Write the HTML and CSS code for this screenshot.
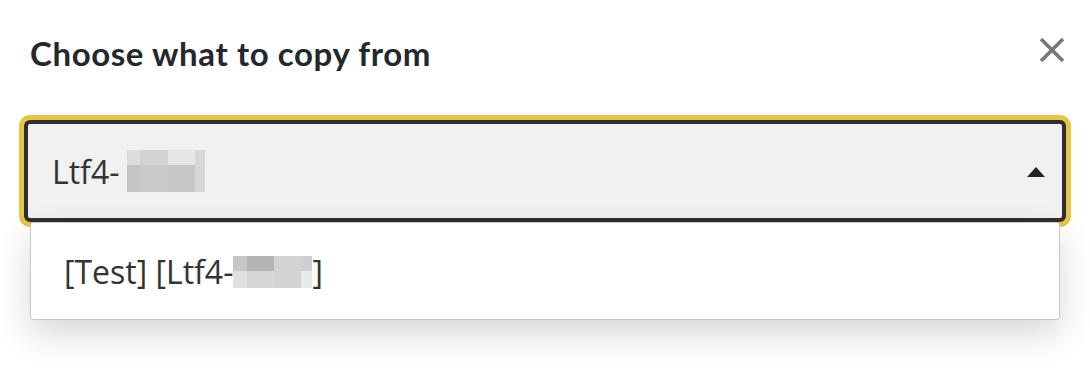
FILE: index.html
```html
<!DOCTYPE html>
<html lang="en">
<head>
    <meta charset="UTF-8">
    <meta name="viewport" content="width=device-width, initial-scale=1.0">
    <title>Choose what to copy from</title>
    <link rel="stylesheet" href="styles.css">
</head>
<body>
    <div class="dialog">
        <div class="dialog-header">
            <h2>Choose what to copy from</h2>
            <button class="close-btn" aria-label="Close">
                <svg viewBox="0 0 26 26" width="26" height="26">
                    <path d="M2 2 L24 24 M24 2 L2 24" stroke="#777" stroke-width="3.6" fill="none"/>
                </svg>
            </button>
        </div>

        <div class="select-wrap">
            <div class="select">
                <span class="select-value">Ltf4-<span class="blur blur-a">
                    <i class="c1"></i><i class="c2"></i><i class="c3"></i><i class="c4"></i>
                    <i class="c5"></i><i class="c6"></i><i class="c7"></i><i class="c8"></i>
                </span></span>
                <span class="caret"></span>
            </div>

            <div class="options">
                <div class="option">[Test] [Ltf4-<span class="blur blur-b">
                    <i class="d1"></i><i class="d2"></i><i class="d3"></i><i class="d4"></i>
                    <i class="d5"></i><i class="d6"></i><i class="d7"></i><i class="d8"></i>
                </span>]</div>
            </div>
        </div>
    </div>
</body>
</html>
```

FILE: styles.css
```css
* {
    margin: 0;
    padding: 0;
    box-sizing: border-box;
}

body {
    font-family: 'Open Sans', 'Noto Sans', Arial, sans-serif;
    background: #fff;
    color: #333;
    min-height: 370px;
}

.dialog {
    padding: 0 24px 50px;
}

.dialog-header {
    display: flex;
    align-items: center;
    justify-content: space-between;
    height: 108px;
    padding: 0 0 2px 6px;
}

.dialog-header h2 {
    font-family: 'Lato', Arial, sans-serif;
    font-weight: 700;
    font-size: 33px;
    letter-spacing: 0.6px;
    color: #24272b;
}

.close-btn {
    background: none;
    border: none;
    width: 26px;
    height: 26px;
    margin: 0 1px 6px 0;
    cursor: pointer;
}

.close-btn svg {
    display: block;
}

.select-wrap {
    margin-top: 12px;
}

.select {
    display: flex;
    align-items: center;
    justify-content: space-between;
    height: 102px;
    padding: 0 17px 0 24px;
    background: #f1f1f1;
    border: 4px solid #2f2f2f;
    border-radius: 6px;
    box-shadow: 0 0 0 5px #e6c647;
}

.select-value {
    font-size: 32px;
    color: #333;
    display: flex;
    align-items: center;
}

.caret {
    width: 0;
    height: 0;
    border-left: 9px solid transparent;
    border-right: 9px solid transparent;
    border-bottom: 10px solid #222;
    margin-top: 2px;
}

.blur {
    display: inline-grid;
    grid-template-rows: 15px 27px;
}

.blur i {
    display: block;
}

.blur-a {
    grid-template-columns: 13px 28px 27px 10px;
    margin-left: 8px;
}

.blur-a .c1 { background: #dcdcdc; }
.blur-a .c2 { background: #d2d2d2; }
.blur-a .c3 { background: #e6e6e6; }
.blur-a .c4 { background: #d8d8d8; }
.blur-a .c5 { background: #c4c4c4; }
.blur-a .c6 { background: #c9c9c9; }
.blur-a .c7 { background: #c8c8c8; }
.blur-a .c8 { background: #d6d6d6; }

.options {
    margin: 0 6px;
    background: #fff;
    border: 1px solid #c8c8c8;
    border-radius: 3px;
    box-shadow: 0 14px 34px rgba(0, 0, 0, 0.16);
}

.option {
    display: flex;
    align-items: center;
    height: 96px;
    padding-left: 33px;
    font-size: 32px;
    color: #333;
}

.blur-b {
    grid-template-columns: 14px 27px 27px 11px;
    grid-template-rows: 15px 17px;
    margin-top: 2px;
}

.blur-b .d1 { background: #c6c6c6; }
.blur-b .d2 { background: #b5b5b5; }
.blur-b .d3 { background: #d4d4d4; }
.blur-b .d4 { background: #cfcfcf; }
.blur-b .d5 { background: #e0e0e0; }
.blur-b .d6 { background: #d6d6d6; }
.blur-b .d7 { background: #d4d4d4; }
.blur-b .d8 { background: #e9e9e9; }
```
